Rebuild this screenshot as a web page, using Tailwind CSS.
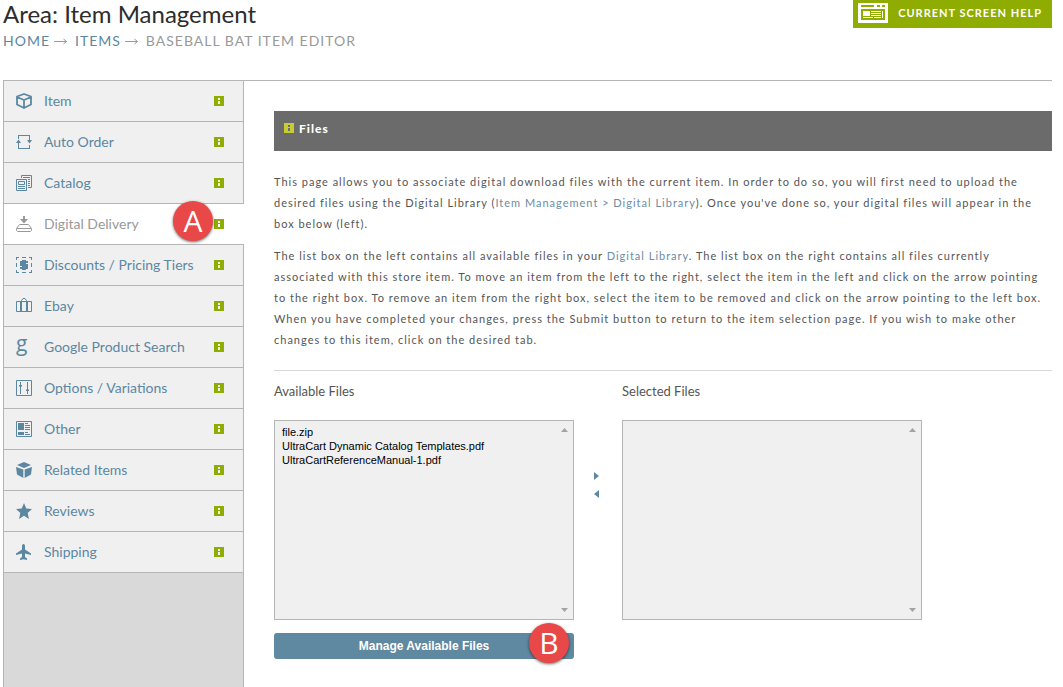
<!DOCTYPE html>
<html lang="en">
    <head>
        <meta charset="UTF-8" />
        <meta name="viewport" content="width=device-width, initial-scale=1.0" />
        <title>Item Management</title>
        <script src="https://cdn.jsdelivr.net/npm/@tailwindcss/browser@4"></script>
    </head>

    <body class="bg-white font-['Lato',sans-serif] text-[#555] min-h-screen flex flex-col pl-[3px] pr-[11px]">
        <!-- shared info marker -->
        <svg class="hidden" xmlns="http://www.w3.org/2000/svg">
            <symbol id="info" viewBox="0 0 10 10">
                <path fill="currentColor" fill-rule="evenodd" d="M0 0h10v10H0zM4 2v2h2V2zM4 5v3h2V5z" />
            </symbol>
        </svg>

        <header class="flex justify-between items-start h-20">
            <div>
                <h1 class="text-2xl leading-7 text-[#2d2d2d]">Area: Item Management</h1>
                <nav class="flex items-center text-sm leading-[26px] tracking-[1px] text-[#999]" aria-label="Breadcrumb">
                    <a href="#" class="text-[#5c87a1]">HOME</a>
                    <svg class="w-[13px] h-[7px] ml-1 mr-2" viewBox="0 0 13 7" fill="none" stroke="currentColor">
                        <path d="M0 3.5h12.500M9.500 1l3 2.500-3 2.500" />
                    </svg>
                    <a href="#" class="text-[#5c87a1]">ITEMS</a>
                    <svg class="w-[13px] h-[7px] ml-1 mr-2" viewBox="0 0 13 7" fill="none" stroke="currentColor">
                        <path d="M0 3.5h12.500M9.500 1l3 2.500-3 2.500" />
                    </svg>
                    <span>BASEBALL BAT ITEM EDITOR</span>
                </nav>
            </div>
            <button class="flex items-center h-7 pb-[2px] pl-[5px] pr-[10px] gap-[10px] bg-[#8fac00] text-white text-[11px] font-bold tracking-[1px]">
                <svg class="w-[30px] h-5" viewBox="0 0 30 20" shape-rendering="crispEdges">
                    <path fill="#fff" fill-rule="evenodd" d="M0 0h30v20H0zM3 2v2h13V2zM19 2v2h3V2zM24 2v2h3V2zM3 6v11h24V6z" />
                    <path fill="#fff" d="M5 8h7v5H5zM13 8h10v1H13zM13 10h10v1H13zM13 12h10v1H13zM5 14h10v1H5zM16 14h7v1h-7zM24 8h1v7h-1z" />
                </svg>
                CURRENT SCREEN HELP
            </button>
        </header>

        <div class="flex flex-1 border-t border-[#b5b5b5]">
            <aside class="w-[241px] shrink-0 bg-[#d9d9d9] border-l border-[#b5b5b5] flex flex-col">
                <ul class="text-sm text-[#5c87a1]">
                    <li class="bg-[#f0f0f0] border-r border-b border-[#b5b5b5]">
                        <a href="#" class="flex items-center h-10 pl-3 pr-[19px] gap-3">
                            <svg class="w-4 h-4" viewBox="0 0 16 16" fill="none" stroke="currentColor" stroke-width="1.800" stroke-linejoin="round">
                                <path d="M8 1l7 2.500v8L8 15l-7-3.500v-8zM1 4l7 3 7-3M8 7v8" />
                            </svg>
                            <span class="flex-1">Item</span>
                            <svg class="w-[10px] h-[10px] text-[#8fac00]"><use href="#info" /></svg>
                        </a>
                    </li>
                    <li class="bg-[#f0f0f0] border-r border-b border-[#b5b5b5]">
                        <a href="#" class="flex items-center h-10 pl-3 pr-[19px] gap-3">
                            <svg class="w-4 h-4" viewBox="0 0 16 16" fill="currentColor">
                                <path d="M2 1h12v5h2l-2.500 3.500L11 6h2V2H3v3H2zM2.500 5.500L5 9H3v5h10v-3h1v4H2V9H0z" />
                            </svg>
                            <span class="flex-1">Auto Order</span>
                            <svg class="w-[10px] h-[10px] text-[#8fac00]"><use href="#info" /></svg>
                        </a>
                    </li>
                    <li class="bg-[#f0f0f0] border-r border-b border-[#b5b5b5]">
                        <a href="#" class="flex items-center h-10 pl-3 pr-[19px] gap-3">
                            <svg class="w-4 h-4" viewBox="0 0 16 16" fill="none" stroke="currentColor">
                                <path d="M.5 4.500h10v11H.5zM2.500 6.500h6v3h-6zM2 11.500h7M2 13.500h7M5.500 3V.5h10v12H12M7 2.500h7M12 4.500h2M12 6.500h2M12 8.500h2M12 10.500h2" />
                            </svg>
                            <span class="flex-1">Catalog</span>
                            <svg class="w-[10px] h-[10px] text-[#8fac00]"><use href="#info" /></svg>
                        </a>
                    </li>
                    <li class="relative bg-white border-b border-[#b5b5b5] pr-px">
                        <a href="#" aria-current="page" class="flex items-center h-10 pl-3 pr-[19px] gap-3 text-[#999]">
                            <svg class="w-4 h-4" viewBox="0 0 16 16" fill="none" stroke="currentColor">
                                <path fill="currentColor" stroke="none" d="M7 0h2v3h3L8 7.500 4 3h3z" />
                                <path d="M3.500 8.500h9l3 4v2l-1 1h-13l-1-1v-2zM1 12.500h14" />
                            </svg>
                            <span class="flex-1">Digital Delivery</span>
                            <svg class="w-[10px] h-[10px] text-[#8fac00]"><use href="#info" /></svg>
                        </a>
                        <span class="absolute right-[31px] -top-[3px] w-10 h-10 rounded-full bg-[#e84848] text-white text-center font-['Open_Sans',sans-serif] text-[30px] leading-10 shadow-[0_1px_3px_rgba(0,0,0,0.6)]">A</span>
                    </li>
                    <li class="bg-[#f0f0f0] border-r border-b border-[#b5b5b5]">
                        <a href="#" class="flex items-center h-10 pl-3 pr-[19px] gap-3">
                            <svg class="w-4 h-4" viewBox="0 0 16 16" fill="none" stroke="currentColor">
                                <path d="M0 .5h3M6 .5h4M13 .5h3M0 15.500h3M6 15.500h4M13 15.500h3M.5 0v3M.5 6v4M.5 13v3M15.500 0v3M15.500 6v4M15.500 13v3" />
                                <path stroke-width="2" d="M12 5H5v3h6v3H4M7 3v10M9 3v10" />
                            </svg>
                            <span class="flex-1">Discounts / Pricing Tiers</span>
                            <svg class="w-[10px] h-[10px] text-[#8fac00]"><use href="#info" /></svg>
                        </a>
                    </li>
                    <li class="bg-[#f0f0f0] border-r border-b border-[#b5b5b5]">
                        <a href="#" class="flex items-center h-10 pl-3 pr-[19px] gap-3">
                            <svg class="w-4 h-4" viewBox="0 0 16 16" fill="none" stroke="currentColor">
                                <path d="M.5 3.500h15v10H.5zM4.500 3v11M11.500 3v11M5.500 14V2.500l1.500-2h2l1.500 2V14" />
                            </svg>
                            <span class="flex-1">Ebay</span>
                            <svg class="w-[10px] h-[10px] text-[#8fac00]"><use href="#info" /></svg>
                        </a>
                    </li>
                    <li class="bg-[#f0f0f0] border-r border-b border-[#b5b5b5]">
                        <a href="#" class="flex items-center h-10 pl-3 pr-[19px] gap-3">
                            <span class="w-4 h-8 font-['Open_Sans',sans-serif] font-medium text-[21px] leading-6" aria-hidden="true">g</span>
                            <span class="flex-1">Google Product Search</span>
                            <svg class="w-[10px] h-[10px] text-[#8fac00]"><use href="#info" /></svg>
                        </a>
                    </li>
                    <li class="bg-[#f0f0f0] border-r border-b border-[#b5b5b5]">
                        <a href="#" class="flex items-center h-10 pl-3 pr-[19px] gap-3">
                            <svg class="w-4 h-4" viewBox="0 0 16 16" fill="none" stroke="currentColor">
                                <path d="M.5.5h15v15H.5zM4.500 2v12M11.500 2v12M3 5.500h3M10 10.500h3M3.500 6.500h2M10.500 9.500h2" />
                            </svg>
                            <span class="flex-1">Options / Variations</span>
                            <svg class="w-[10px] h-[10px] text-[#8fac00]"><use href="#info" /></svg>
                        </a>
                    </li>
                    <li class="bg-[#f0f0f0] border-r border-b border-[#b5b5b5]">
                        <a href="#" class="flex items-center h-10 pl-3 pr-[19px] gap-3">
                            <svg class="w-4 h-4" viewBox="0 0 16 16" fill="none" stroke="currentColor">
                                <path d="M.5.5h15v15H.5zM9 2.500h3M9 4.500h5M9 6.500h5M9 8.500h5M9 11.500h3M9 13.500h5" />
                                <path fill="currentColor" stroke="none" d="M2 2h6v7H2zM2 11h6v3H2z" />
                            </svg>
                            <span class="flex-1">Other</span>
                            <svg class="w-[10px] h-[10px] text-[#8fac00]"><use href="#info" /></svg>
                        </a>
                    </li>
                    <li class="bg-[#f0f0f0] border-r border-b border-[#b5b5b5]">
                        <a href="#" class="flex items-center h-10 pl-3 pr-[19px] gap-3">
                            <svg class="w-4 h-4" viewBox="0 0 16 16" fill="currentColor">
                                <path d="M8 0l7 3-7 3-7-3zM0 5l7.300 2.500V16L1 12.500zM16 5L8.700 7.500V16l6.300-3.500z" />
                            </svg>
                            <span class="flex-1">Related Items</span>
                            <svg class="w-[10px] h-[10px] text-[#8fac00]"><use href="#info" /></svg>
                        </a>
                    </li>
                    <li class="bg-[#f0f0f0] border-r border-b border-[#b5b5b5]">
                        <a href="#" class="flex items-center h-10 pl-3 pr-[19px] gap-3">
                            <svg class="w-4 h-4" viewBox="0 0 16 16" fill="currentColor">
                                <path d="M8 0l2.300 5.500 5.700.5-4.300 4 1.300 6-5-3.200L3 16l1.300-6L0 6l5.700-.5z" />
                            </svg>
                            <span class="flex-1">Reviews</span>
                            <svg class="w-[10px] h-[10px] text-[#8fac00]"><use href="#info" /></svg>
                        </a>
                    </li>
                    <li class="bg-[#f0f0f0] border-r border-b border-[#b5b5b5]">
                        <a href="#" class="flex items-center h-10 pl-3 pr-[19px] gap-3">
                            <svg class="w-4 h-4" viewBox="0 0 16 16" fill="currentColor">
                                <path d="M7.500 0C8.500 0 9 1 9 2v3.500l6 4V11L9 9.500V13l2 1.500V16l-3.500-.7L4 16v-1.500L6 13V9.500L0 11V9.500l6-4V2c0-1 .5-2 1.500-2z" />
                            </svg>
                            <span class="flex-1">Shipping</span>
                            <svg class="w-[10px] h-[10px] text-[#8fac00]"><use href="#info" /></svg>
                        </a>
                    </li>
                </ul>
                <div class="flex-1 border-r border-[#b5b5b5]"></div>
            </aside>

            <main class="flex-1 min-w-0 pt-[30px] pl-[30px] text-[11px]">
                <h2 class="flex items-start gap-[5px] h-10 pl-[10px] pt-[9px] bg-[#6b6b6b] text-white text-xs font-black leading-[18px] tracking-[1px]">
                    <svg class="w-[10px] h-[10px] mt-[3px] text-[#c8cc33]"><use href="#info" /></svg>
                    Files
                </h2>

                <div class="pt-5 pb-5 space-y-[11px] leading-[21px] tracking-[1px] border-b border-[#d9d9d9]">
                    <p>
                        This page allows you to associate digital download files with the current item. In order to do so, you will first need to upload the
                        desired files using the Digital Library (<a href="#" class="text-[#6b8ba4]">Item Management &gt; Digital Library</a>). Once you've done so, your digital files will appear in the
                        box below (left).
                    </p>
                    <p>
                        The list box on the left contains all available files in your <a href="#" class="text-[#6b8ba4]">Digital Library</a>. The list box on the right contains all files currently
                        associated with this store item. To move an item from the left to the right, select the item in the left and click on the arrow pointing
                        to the right box. To remove an item from the right box, select the item to be removed and click on the arrow pointing to the left box.
                        When you have completed your changes, press the Submit button to return to the item selection page. If you wish to make other
                        changes to this item, click on the desired tab.
                    </p>
                </div>

                <div class="flex pt-[10px]">
                    <div class="w-[300px]">
                        <label for="available" class="block text-[13px] leading-5">Available Files</label>
                        <div class="relative mt-[19px]">
                            <select id="available" multiple class="block w-full h-[200px] px-[5px] py-[5px] bg-[#f0f0f0] border border-[#b5b5b5] overflow-hidden font-['Liberation_Sans',sans-serif] text-[11px] text-black">
                                <option class="h-[14px] p-0 px-[2px] leading-[14px] min-h-0">file.zip</option>
                                <option class="h-[14px] p-0 px-[2px] leading-[14px] min-h-0">UltraCart Dynamic Catalog Templates.pdf</option>
                                <option class="h-[14px] p-0 px-[2px] leading-[14px] min-h-0">UltraCartReferenceManual-1.pdf</option>
                            </select>
                            <svg class="absolute right-[6px] top-2 w-[7px] h-1 pointer-events-none" viewBox="0 0 7 4" fill="#a3a3a3"><path d="M0 4L3.500 0 7 4z" /></svg>
                            <svg class="absolute right-[6px] bottom-2 w-[7px] h-1 pointer-events-none" viewBox="0 0 7 4" fill="#a3a3a3"><path d="M0 0h7L3.500 4z" /></svg>
                        </div>
                        <div class="relative mt-[13px]">
                            <button class="block w-full h-[26px] rounded-[3px] bg-[#5f88a1] text-white font-['Liberation_Sans',sans-serif] text-xs font-bold">Manage Available Files</button>
                            <span class="absolute right-[5px] -top-[10px] w-10 h-10 rounded-full bg-[#e84848] text-white text-center font-['Open_Sans',sans-serif] text-[30px] leading-10 shadow-[0_1px_3px_rgba(0,0,0,0.6)]">B</span>
                        </div>
                    </div>
                    <div class="w-12 flex flex-col items-center gap-[10px] pt-[91px] pr-[3px]">
                        <button aria-label="Add to selected" class="text-[#5f88a1]">
                            <svg class="w-[5px] h-2" viewBox="0 0 5 8" fill="currentColor"><path d="M0 0l5 4-5 4z" /></svg>
                        </button>
                        <button aria-label="Remove from selected" class="text-[#5f88a1]">
                            <svg class="w-[5px] h-2" viewBox="0 0 5 8" fill="currentColor"><path d="M5 0L0 4l5 4z" /></svg>
                        </button>
                    </div>
                    <div class="w-[300px]">
                        <label for="selected" class="block text-[13px] leading-5">Selected Files</label>
                        <div class="relative mt-[19px]">
                            <select id="selected" multiple class="block w-full h-[200px] bg-[#f0f0f0] border border-[#b5b5b5] overflow-hidden"></select>
                            <svg class="absolute right-[6px] top-2 w-[7px] h-1 pointer-events-none" viewBox="0 0 7 4" fill="#a3a3a3"><path d="M0 4L3.500 0 7 4z" /></svg>
                            <svg class="absolute right-[6px] bottom-2 w-[7px] h-1 pointer-events-none" viewBox="0 0 7 4" fill="#a3a3a3"><path d="M0 0h7L3.500 4z" /></svg>
                        </div>
                    </div>
                </div>
            </main>
        </div>
    </body>
</html>
